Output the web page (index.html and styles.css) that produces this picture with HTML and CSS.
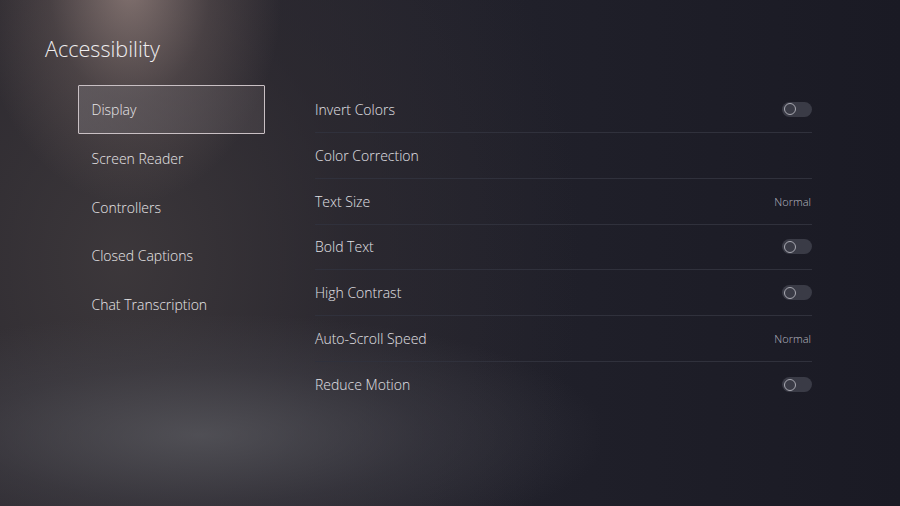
FILE: index.html
```html
<!DOCTYPE html>
<html lang="en">
<head>
<meta charset="utf-8">
<title>Accessibility</title>
<link rel="stylesheet" href="styles.css">
</head>
<body>
<div class="screen">
  <div class="glow-top"></div>
  <div class="glow-bottom"></div>
  <h1 class="title">Accessibility</h1>
  <div class="content">
    <nav class="menu">
      <div class="menu-item selected">Display</div>
      <div class="menu-item">Screen Reader</div>
      <div class="menu-item">Controllers</div>
      <div class="menu-item">Closed Captions</div>
      <div class="menu-item">Chat Transcription</div>
    </nav>
    <ul class="settings">
      <li class="row"><span class="label">Invert Colors</span><span class="toggle"><span class="knob"></span></span></li>
      <li class="row"><span class="label">Color Correction</span></li>
      <li class="row"><span class="label">Text Size</span><span class="value">Normal</span></li>
      <li class="row"><span class="label">Bold Text</span><span class="toggle"><span class="knob"></span></span></li>
      <li class="row"><span class="label">High Contrast</span><span class="toggle"><span class="knob"></span></span></li>
      <li class="row"><span class="label">Auto-Scroll Speed</span><span class="value">Normal</span></li>
      <li class="row last"><span class="label">Reduce Motion</span><span class="toggle"><span class="knob"></span></span></li>
    </ul>
  </div>
</div>
</body>
</html>
```
FILE: styles.css
```css
* { box-sizing: border-box; }
html, body { margin: 0; padding: 0; }
body {
  width: 900px;
  height: 506px;
  overflow: hidden;
  font-family: "Open Sans", "Noto Sans", sans-serif;
  color: #e4e2e4;
}
.screen {
  position: relative;
  width: 900px;
  height: 506px;
  overflow: hidden;
  background:
    radial-gradient(ellipse 460px 580px at 120px 260px, rgba(62,57,60,0.9) 0%, rgba(48,44,50,0.6) 50%, rgba(27,28,38,0) 100%),
    linear-gradient(90deg, #2a282e 0%, #22222c 45%, #1a1a24 100%);
  padding: 33px 0 0 45px;
}
.glow-top {
  position: absolute;
  left: -20px;
  top: -130px;
  width: 300px;
  height: 330px;
  background: radial-gradient(ellipse at 50% 35%, rgba(185,160,152,0.6) 0%, rgba(140,120,115,0.28) 38%, rgba(80,70,70,0) 72%);
  pointer-events: none;
}
.glow-bottom {
  position: absolute;
  left: -200px;
  top: 315px;
  width: 800px;
  height: 240px;
  background: radial-gradient(ellipse at 50% 50%, rgba(100,101,107,0.6) 0%, rgba(78,78,86,0.32) 40%, rgba(40,40,50,0) 72%);
  pointer-events: none;
}
.title {
  position: relative;
  margin: 0;
  font-weight: 300;
  font-size: 21.6px;
  line-height: 32px;
  color: #f0eef0;
}
.content {
  position: relative;
  display: flex;
  margin-top: 20px;
}
.menu {
  width: 187px;
  margin-left: 33px;
  display: flex;
  flex-direction: column;
}
.menu-item {
  height: 48.75px;
  display: flex;
  align-items: center;
  padding-left: 12.5px;
  font-size: 14px;
  font-weight: 300;
  color: #e8e6e8;
  border: 1.5px solid transparent;
}
.menu-item.selected {
  height: 49px;
  border-color: #c9c0c4;
  background: linear-gradient(90deg, rgba(110,105,110,0.55), rgba(85,78,82,0.45));
  border-radius: 1px;
}
.settings {
  list-style: none;
  margin: 2px 0 0 50px;
  padding: 0;
  width: 497px;
}
.row {
  height: 45.85px;
  display: flex;
  align-items: center;
  justify-content: space-between;
  border-bottom: 1px solid #30313c;
  font-size: 14px;
  font-weight: 300;
  color: #e2e1e6;
}
.row.last { border-bottom: none; }
.value {
  font-size: 11px;
  color: #b9b9c2;
  margin-right: 1px;
}
.toggle {
  width: 30px;
  height: 15px;
  border-radius: 8px;
  background: #3a3b46;
  position: relative;
  display: inline-block;
}
.knob {
  position: absolute;
  left: 2px;
  top: 1.5px;
  width: 12px;
  height: 12px;
  border-radius: 50%;
  border: 1.5px solid #a9a9b2;
  background: #3a3b46;
}
```
